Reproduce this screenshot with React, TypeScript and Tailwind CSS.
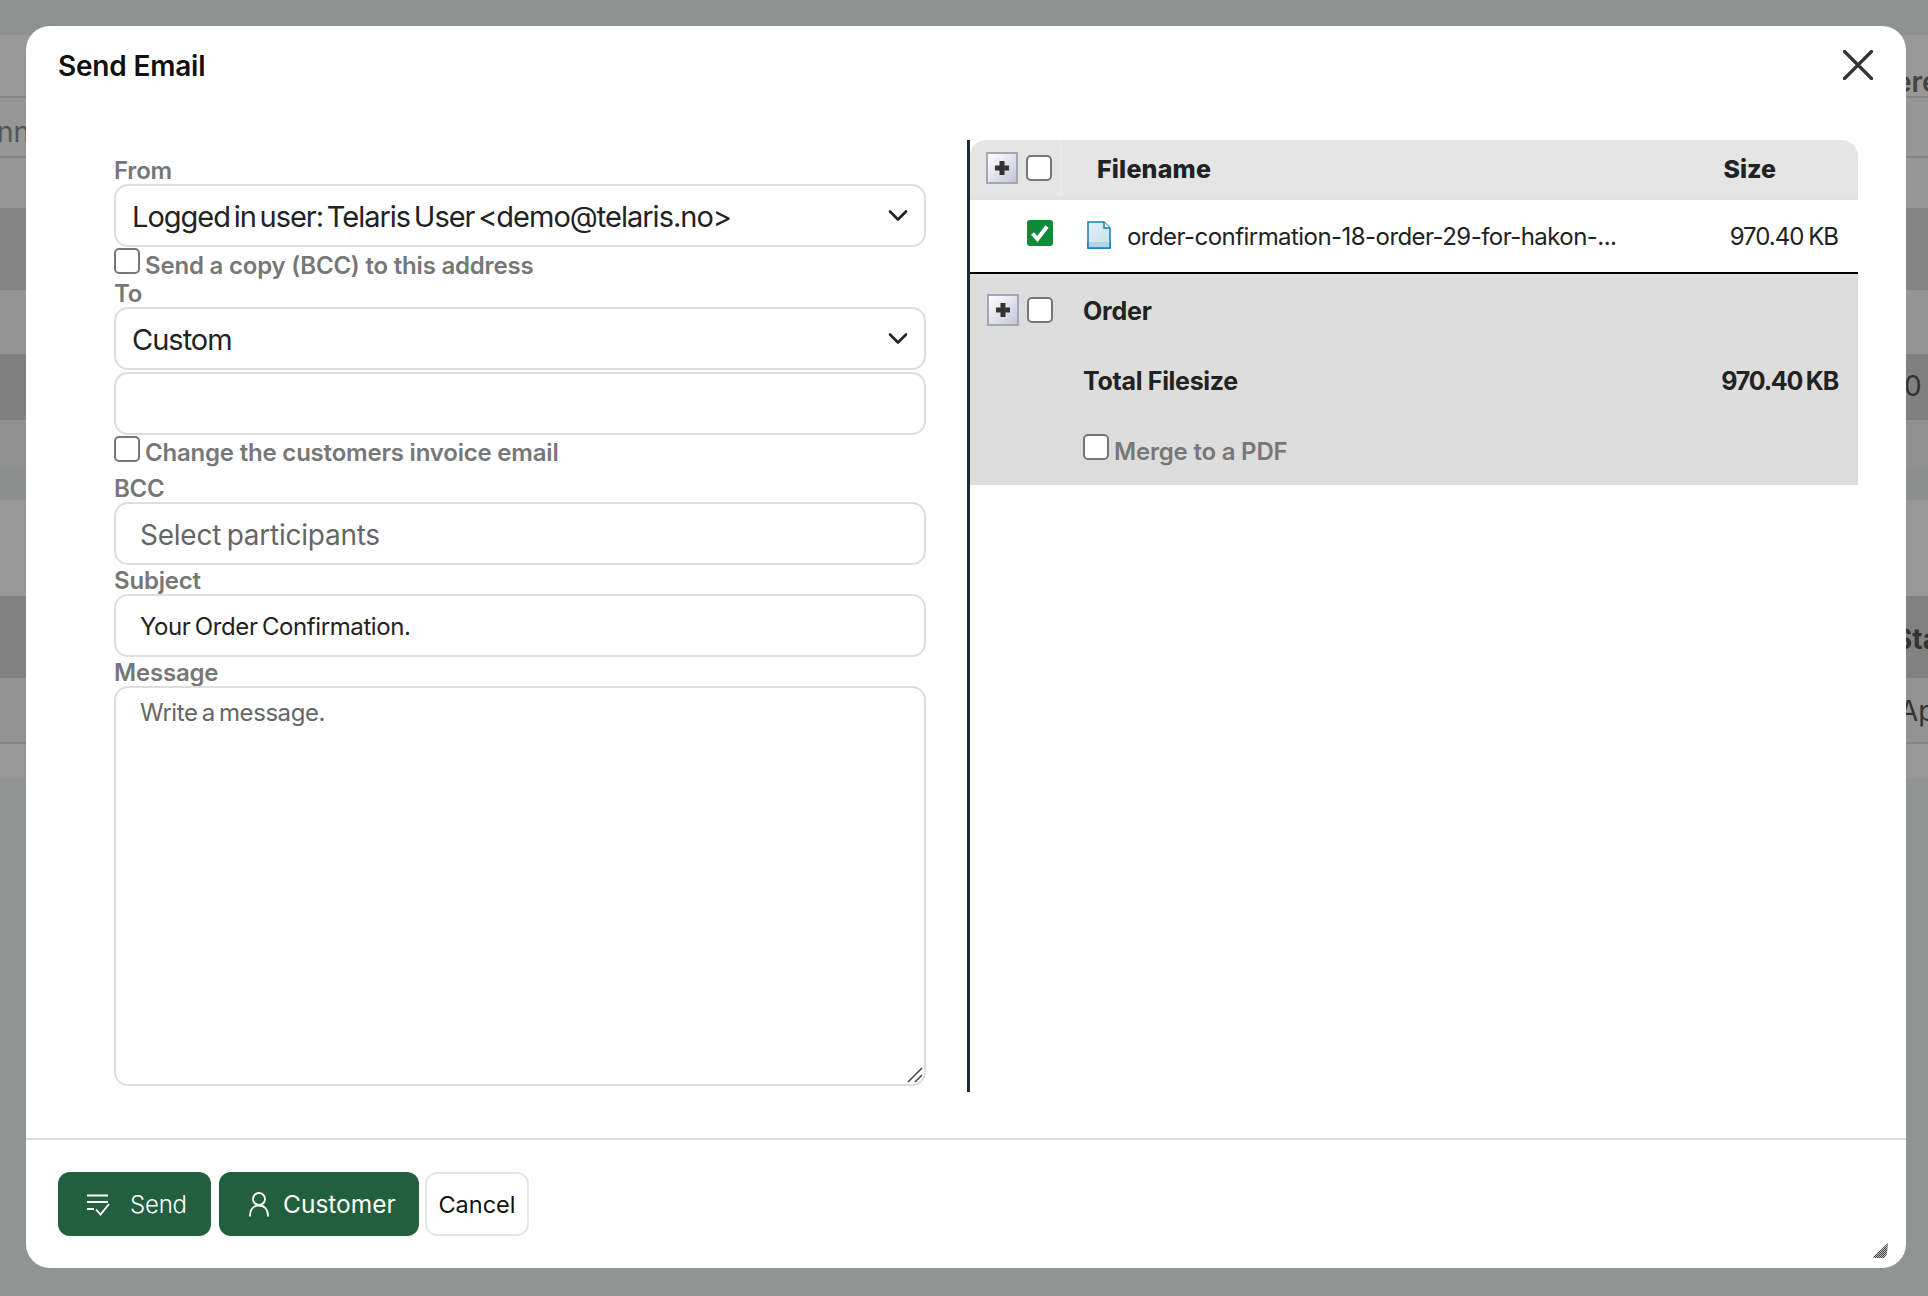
const FONT = "font-['Inter','Liberation_Sans',sans-serif]";

const Checkbox = ({ className = "" }: { className?: string }) => (
  <span className={`block shrink-0 w-[26px] h-[26px] rounded-[5px] border-2 border-[#767676] bg-white ${className}`} />
);

const PlusButton = () => (
  <span className="flex items-center justify-center shrink-0 w-[32px] h-[32px] border-2 border-[#a5a5b8] bg-gradient-to-br from-white to-[#c6c6d8]">
    <svg width="14" height="14" viewBox="0 0 14 14">
      <path d="M4.5 0h5v4.5H14v5H9.5V14h-5V9.5H0v-5h4.5z" fill="#333" />
    </svg>
  </span>
);

const Chevron = () => (
  <svg className="absolute right-[18px] top-[25px]" width="20" height="14" viewBox="0 0 20 14" fill="none">
    <path d="M2 2.5l8 8 8-8" stroke="#222" strokeWidth="2.6" strokeLinecap="round" strokeLinejoin="round" />
  </svg>
);

const FieldLabel = ({ children }: { children: string }) => (
  <label className="block h-[26px] leading-[26px] text-[24px] font-semibold tracking-[-0.2px] text-[#777]">{children}</label>
);

const SelectBox = ({ value }: { value: string }) => (
  <div className="relative h-[63px]">
    <select
      defaultValue={value}
      className="block w-full h-full appearance-none rounded-[14px] border-2 border-[#dedede] bg-white pl-[16px] pr-[50px] pt-[3px] text-[29px] tracking-[-1px] [word-spacing:-3.5px] text-[#222]"
    >
      <option>{value}</option>
    </select>
    <Chevron />
  </div>
);

const TextBox = ({ placeholder, value, big }: { placeholder?: string; value?: string; big?: boolean }) => (
  <input
    readOnly
    placeholder={placeholder}
    value={value ?? ""}
    className={`block w-full h-[63px] rounded-[14px] border-2 border-[#dedede] bg-white px-[24px] pt-[2px] [word-spacing:-2px] text-[#222] placeholder:text-[#666] ${big ? "text-[28px] tracking-[-0.25px]" : "text-[24px] tracking-[-0.4px]"}`}
  />
);

const CheckRow = ({ label, className, textTop }: { label: string; className: string; textTop: string }) => (
  <div className={`flex items-start gap-[5px] ${className}`}>
    <Checkbox className="mt-px" />
    <span className={`leading-[26px] text-[24px] font-semibold tracking-[-0.2px] text-[#777] ${textTop}`}>{label}</span>
  </div>
);

const BackgroundRow = ({ className, children }: { className: string; children?: React.ReactNode }) => (
  <div className={`relative whitespace-nowrap text-[#333] text-[28px] ${className}`}>{children}</div>
);

const App = () => {
  return (
    <div className={`relative h-[1296px] overflow-hidden bg-[#929493] ${FONT}`}>
      <BackgroundRow className="h-[35px] bg-[#909291]" />
      <BackgroundRow className="h-[63px] bg-[#989898] border-b-2 border-[#848484] pl-[1895px] pt-[26px] font-semibold text-[#444]">
        ere
      </BackgroundRow>
      <BackgroundRow className="h-[60px] bg-[#969696] border-b-2 border-[#848484] pt-[13px] text-[#555]">
        <span className="-ml-[3px]">nn</span>
      </BackgroundRow>
      <BackgroundRow className="h-[50px] bg-[#979797]" />
      <BackgroundRow className="h-[82px] bg-[#848484]" />
      <BackgroundRow className="h-[64px] bg-[#959595]" />
      <BackgroundRow className="h-[66px] bg-[#808080] pl-[1904px] pt-[11px] text-[#222]">0</BackgroundRow>
      <BackgroundRow className="h-[48px] bg-[#909090]" />
      <BackgroundRow className="h-[32px] bg-[#8d8f8e]" />
      <BackgroundRow className="h-[82px] bg-[#989898]" />
      <BackgroundRow className="h-[14px] bg-[#989898]" />
      <BackgroundRow className="h-[82px] bg-[#818181] pl-[1894px] pt-[22px] font-bold text-[#222]">Sta</BackgroundRow>
      <BackgroundRow className="h-[66px] bg-[#939393] border-b-2 border-[#848484] pl-[1899px] pt-[12px] text-[#333]">Ap</BackgroundRow>
      <BackgroundRow className="h-[34px] bg-[#989898]" />

      <div className="absolute left-[26px] top-[26px] w-[1880px] h-[1242px] rounded-[24px] bg-white flex flex-col overflow-hidden">
        <div className="h-[114px] shrink-0 flex justify-between items-start pl-[32px] pr-[33px]">
          <h2 className="mt-[24px] leading-[32px] text-[28px] font-semibold tracking-[-0.2px] text-[#111]">Send Email</h2>
          <button className="mt-[24px]">
            <svg width="30" height="30" viewBox="0 0 30 30" fill="none">
              <path d="M1.5 1.5l27 27M28.5 1.5l-27 27" stroke="#333" strokeWidth="3.2" strokeLinecap="round" />
            </svg>
          </button>
        </div>

        <div className="h-[952px] shrink-0 flex pl-[88px]">
          <div className="w-[812px] shrink-0 pt-[18px]">
            <FieldLabel>From</FieldLabel>
            <SelectBox value="Logged in user: Telaris User <demo@telaris.no>" />
            <CheckRow label="Send a copy (BCC) to this address" className="h-[34px]" textTop="mt-[6px]" />
            <FieldLabel>To</FieldLabel>
            <SelectBox value="Custom" />
            <div className="mt-[2px]">
              <TextBox />
            </div>
            <CheckRow label="Change the customers invoice email" className="h-[41px]" textTop="mt-[5px]" />
            <FieldLabel>BCC</FieldLabel>
            <TextBox placeholder="Select participants" big />
            <div className="mt-[3px]">
              <FieldLabel>Subject</FieldLabel>
            </div>
            <TextBox value="Your Order Confirmation." />
            <div className="mt-[3px]">
              <FieldLabel>Message</FieldLabel>
            </div>
            <div className="relative h-[400px]">
              <textarea
                readOnly
                placeholder="Write a message."
                className="block w-full h-full resize-none rounded-[14px] border-2 border-[#dedede] bg-white px-[24px] pt-[7px] text-[24px] tracking-[-0.45px] [word-spacing:-2px] placeholder:text-[#666]"
              />
              <svg className="absolute right-[3px] bottom-[3px]" width="16" height="16" viewBox="0 0 16 16" fill="none" stroke="#444" strokeWidth="1.5">
                <path d="M1 15L15 1M8 15l7-7" />
              </svg>
            </div>
          </div>

          <div className="ml-[41px] w-[891px] shrink-0 border-l-[3px] border-[#222b33]">
            <div className="h-[60px] flex rounded-t-[16px] bg-[#e5e5e5] border-b-4 border-[#e0e3e6] text-[25px] font-extrabold text-[#222]">
              <div className="w-[92px] shrink-0 flex items-center gap-[8px] pl-[16px] border-r-2 border-[#e9e9ea]">
                <PlusButton />
                <Checkbox />
              </div>
              <span className="ml-[35px] leading-[58px] tracking-[0.2px]">Filename</span>
              <span className="ml-auto mr-[82px] leading-[58px]">Size</span>
            </div>

            <div className="h-[74px] flex items-center border-b-2 border-black text-[24px] text-[#222]">
              <span className="ml-[57px] w-[26px] h-[26px] -mt-[6px] flex items-center justify-center rounded-[3px] bg-[#0f8a38]">
                <svg width="20" height="18" viewBox="0 0 20 18" fill="none">
                  <path d="M2.5 9.5l5 5.5L17 2.5" stroke="#fff" strokeWidth="4" />
                </svg>
              </span>
              <svg className="ml-[34px] -mt-[2px]" width="24" height="28" viewBox="0 0 24 28" fill="none">
                <defs>
                  <linearGradient id="doc" x1="0" y1="0" x2="1" y2="1">
                    <stop offset="0" stopColor="#e4f1f8" />
                    <stop offset="1" stopColor="#c5dfec" />
                  </linearGradient>
                </defs>
                <path d="M1 1h16l6 6v20H1z" fill="url(#doc)" stroke="#1a7cb8" strokeWidth="1.5" />
                <path d="M1 21h22v6H1z" fill="#b3d6e6" />
                <path d="M17 1v6h6" fill="#fff" stroke="#1a7cb8" strokeWidth="1.5" />
                <path d="M1 21v6h22v-6" stroke="#1a7cb8" strokeWidth="1.5" />
              </svg>
              <span className="ml-[16px] mt-[2px] tracking-[-0.55px]">order-confirmation-18-order-29-for-hakon-...</span>
              <span className="ml-auto mr-[20px] mt-[2px] tracking-[-1px] [word-spacing:-1px]">970.40 KB</span>
            </div>

            <div className="h-[211px] bg-[#dddddd] text-[25px] font-bold text-[#222] pl-[113px] pr-[20px] relative">
              <div className="absolute left-[17px] top-[20px] flex items-center gap-[8px]">
                <PlusButton />
                <Checkbox />
              </div>
              <div className="h-[75px] pt-[21px] leading-[32px] tracking-[-0.2px]">Order</div>
              <div className="h-[57px] pt-[16px] leading-[32px] flex justify-between tracking-[-0.3px]">
                <span>Total Filesize</span>
                <span className="tracking-[-1.2px] [word-spacing:-1px]">970.40 KB</span>
              </div>
              <div className="flex items-start gap-[5px] pt-[28px]">
                <Checkbox />
                <span className="mt-[5px] leading-[26px] text-[24px] font-semibold tracking-[-0.2px] text-[#777]">Merge to a PDF</span>
              </div>
            </div>
          </div>
        </div>

        <div className="mt-[46px] border-t-2 border-[#dedede] pt-[32px] pl-[32px] flex">
          <button className="flex items-center w-[153px] h-[64px] rounded-[12px] bg-[#225f3f] pl-[28px] pt-[1px] text-[24px] font-light tracking-[-0.2px] text-white">
            <svg width="24" height="22" viewBox="0 0 24 22" fill="none" stroke="#fff" strokeWidth="1.8">
              <path d="M1 1.5h21M1 8h21M1 15h7" />
              <path d="M10 15.5l4.5 5L23 10" />
            </svg>
            <span className="ml-[20px]">Send</span>
          </button>
          <button className="ml-[8px] flex items-center w-[200px] h-[64px] rounded-[12px] bg-[#225f3f] pl-[30px] pt-[1px] text-[24.5px] font-normal text-white">
            <svg width="20" height="25" viewBox="0 0 20 25" fill="none" stroke="#fff" strokeWidth="1.8">
              <circle cx="10" cy="7" r="6" />
              <path d="M1 24.5c0-7 3.5-11 9-11s9 4 9 11" />
            </svg>
            <span className="ml-[14px]">Customer</span>
          </button>
          <button className="ml-[6px] w-[104px] h-[64px] rounded-[12px] border-2 border-[#e6e6ea] bg-white pt-[1px] text-[23.5px] text-[#111]">Cancel</button>
        </div>

        <svg className="absolute right-[18px] bottom-[10px]" width="15" height="15" viewBox="0 0 15 15">
          <defs>
            <pattern id="grip" width="2" height="2" patternUnits="userSpaceOnUse">
              <rect width="2" height="2" fill="#bbb" />
              <rect width="1" height="1" fill="#444" />
              <rect x="1" y="1" width="1" height="1" fill="#444" />
            </pattern>
          </defs>
          <path d="M15 0L0 14l1 1h10l3-4z" fill="url(#grip)" />
        </svg>
      </div>
    </div>
  );
};

export default App;
